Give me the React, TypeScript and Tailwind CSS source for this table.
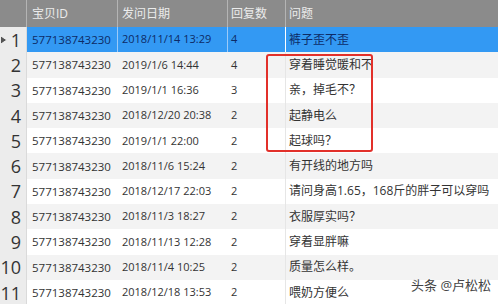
const rows = [
  { id: "577138743230", date: "2018/11/14 13:29", reply: "4", q: "裤子歪不歪" },
  { id: "577138743230", date: "2019/1/6 14:44", reply: "4", q: "穿着睡觉暖和不" },
  { id: "577138743230", date: "2019/1/1 16:36", reply: "3", q: "亲，掉毛不？" },
  { id: "577138743230", date: "2018/12/20 20:38", reply: "2", q: "起静电么" },
  { id: "577138743230", date: "2019/1/1 22:00", reply: "2", q: "起球吗？" },
  { id: "577138743230", date: "2018/11/6 15:24", reply: "2", q: "有开线的地方吗" },
  { id: "577138743230", date: "2018/12/17 22:03", reply: "2", q: "请问身高1.65，168斤的胖子可以穿吗" },
  { id: "577138743230", date: "2018/11/3 18:27", reply: "2", q: "衣服厚实吗？" },
  { id: "577138743230", date: "2018/11/13 12:28", reply: "2", q: "穿着显胖嘛" },
  { id: "577138743230", date: "2018/11/4 10:25", reply: "2", q: "质量怎么样。" },
  { id: "577138743230", date: "2018/12/18 13:53", reply: "2", q: "喂奶方便么" },
];

const font = { fontFamily: '"Open Sans", "Noto Sans CJK SC", sans-serif' };

export default function App() {
  return (
    <div
      className="relative w-[498px] h-[304px] overflow-hidden bg-white text-[#333]"
      style={font}
    >
      {/* header */}
      <div className="flex h-[27px] bg-[#8b8b8b] text-[12px] text-[#ececec]">
        <div className="w-[27px] border-r border-[#b4b4b4]" />
        <div className="w-[91px] flex items-center pl-[5px] border-r border-[#b4b4b4]">宝贝ID</div>
        <div className="w-[110px] flex items-center pl-[4px] border-r border-[#b4b4b4]">发问日期</div>
        <div className="w-[58px] flex items-center pl-[3px] border-r border-[#b4b4b4]">回复数</div>
        <div className="flex-1 flex items-center pl-[3px]">问题</div>
      </div>

      {/* body */}
      {rows.map((r, i) => {
        const sel = i === 0;
        const bg = sel ? "bg-[#3399f3]" : i % 2 === 1 ? "bg-[#f3f3f3]" : "bg-white";
        const txt = sel ? "text-[#0d2b66]" : "text-[#333]";
        return (
          <div key={i} className={`flex h-[25.3px] ${bg} ${txt}`}>
            <div className="relative w-[27px] flex items-center justify-end pr-[5px] bg-[#ececec] border-r border-[#dadada] text-[18px] text-[#333] leading-none">
              {sel && (
                <svg className="absolute left-0 top-[8px]" width="8" height="10" viewBox="0 0 8 10">
                  <path d="M0.5 0.8 L6.8 5 L0.5 9.2 Z" fill="#555" stroke="#fff" strokeWidth="0.8" />
                </svg>
              )}
              {i + 1}
            </div>
            <div className={`w-[91px] flex items-center pl-[5px] text-[11.5px] border-r ${sel ? "border-[#9ccaf8]" : "border-transparent"}`}>
              {r.id}
            </div>
            <div className={`w-[110px] flex items-center pl-[4px] text-[11px] border-r ${sel ? "border-[#9ccaf8]" : "border-transparent"}`}>
              {r.date}
            </div>
            <div className={`w-[58px] flex items-center pl-[3px] text-[11px] border-r ${sel ? "border-white" : "border-[#e6e6e6]"}`}>
              {r.reply}
            </div>
            <div className="flex-1 flex items-center pl-[3px] text-[12px] whitespace-nowrap">{r.q}</div>
          </div>
        );
      })}

      {/* red highlight box */}
      <div className="absolute left-[266px] top-[54px] w-[107px] h-[98px] border-2 border-[#e2302a] rounded-[3px]" />

      {/* watermark */}
      <div className="absolute left-[411px] top-[276px] whitespace-nowrap text-[13px] text-[#444] [text-shadow:0_0_2px_#fff]">
        头条 @卢松松
      </div>
    </div>
  );
}
